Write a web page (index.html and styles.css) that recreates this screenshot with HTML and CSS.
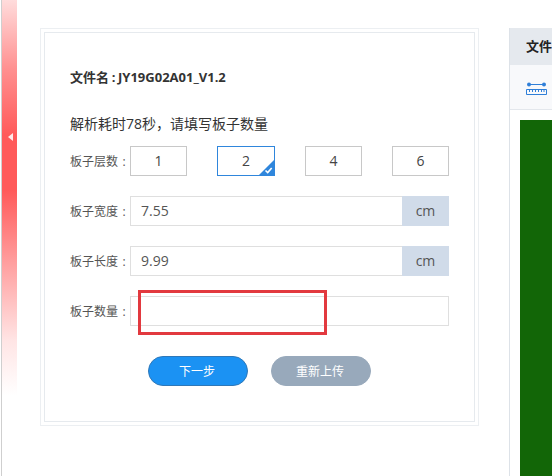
FILE: index.html
```html
<!DOCTYPE html>
<html lang="zh">
<head>
<meta charset="utf-8">
<title>板子数量</title>
<link rel="stylesheet" href="styles.css">
</head>
<body>
<div class="page">
  <aside class="rail"><span class="rail-arrow"></span></aside>
  <main class="card-outer">
    <div class="card">
      <div class="file-name">文件名<span class="sep">:</span>JY19G02A01_V1.2</div>
      <div class="hint">解析耗时78秒<span class="punct">，</span>请填写板子数量</div>
      <div class="row">
        <span class="label">板子层数<span class="colon">:</span></span>
        <div class="layers">
          <span class="layer">1</span>
          <span class="layer active">2<svg class="tick" viewBox="0 0 15 15"><path d="M15 0V15H0Z" fill="#2f86dc"/><path d="M6.5 10.5l2.2 2 4-4.6" fill="none" stroke="#fff" stroke-width="1.6"/></svg></span>
          <span class="layer">4</span>
          <span class="layer">6</span>
        </div>
      </div>
      <div class="row">
        <span class="label">板子宽度<span class="colon">:</span></span>
        <div class="field"><span class="value">7.55</span><span class="unit">cm</span></div>
      </div>
      <div class="row">
        <span class="label">板子长度<span class="colon">:</span></span>
        <div class="field"><span class="value">9.99</span><span class="unit">cm</span></div>
      </div>
      <div class="row">
        <span class="label">板子数量<span class="colon">:</span></span>
        <div class="field"><span class="value"></span></div>
        <span class="callout"></span>
      </div>
      <div class="actions">
        <span class="btn btn-next">下一步</span>
        <span class="btn btn-reset">重新上传</span>
      </div>
    </div>
  </main>
  <section class="preview">
    <header class="preview-head">文件名<span class="sep">:</span>JY19G02A01_V1.2</header>
    <div class="preview-tools">
      <svg class="ruler" viewBox="0 0 21 15" width="21" height="15">
        <path d="M3 4.5H18" stroke="#2f7fd8" stroke-width="1" fill="none"/>
        <circle cx="3" cy="4.5" r="2" fill="#2f7fd8"/>
        <circle cx="18" cy="4.5" r="2" fill="#2f7fd8"/>
        <path d="M.5 9.5H20.5V14.5H.5ZM3.5 9.5V12M6.5 9.5V12M9.5 9.5V12M12.5 9.5V12M15.5 9.5V12M18 9.5V12" stroke="#2f7fd8" stroke-width="1" fill="none"/>
      </svg>
    </div>
    <div class="preview-body"><div class="board"></div></div>
  </section>
</div>
</body>
</html>
```
FILE: styles.css
```css
html, body {
  margin: 0;
  height: 100%;
  overflow: hidden;
  background: #fff;
}
body {
  font-family: "Open Sans", "Noto Sans CJK SC", sans-serif;
  color: #333;
}
.page {
  display: flex;
  align-items: flex-start;
  width: 552px;
  height: 476px;
  overflow: hidden;
}
.rail {
  flex: none;
  position: relative;
  width: 15px;
  height: 476px;
  margin-left: 2px;
  background: linear-gradient(to bottom, #ffdcdc 0, #ff8f8f 70px, #ff5a5a 135px, #ff5a5a 190px, #ff9c9c 260px, #ffe4e4 340px, #fff 395px);
  box-shadow: -1px 0 0 #cfcfcf;
}
.rail-arrow {
  position: absolute;
  left: 6px;
  top: 133px;
  border-style: solid;
  border-width: 4px 5px 4px 0;
  border-color: transparent #ffe9e9 transparent transparent;
}
.punct {
  font-family: "Noto Sans CJK TC", sans-serif;
}
.sep {
  display: inline-block;
  width: 9px;
  text-align: center;
}
.colon {
  display: inline-block;
  width: 12px;
  text-align: center;
}
.card-outer {
  flex: none;
  box-sizing: border-box;
  width: 439px;
  height: 398px;
  margin: 28px 0 0 23px;
  padding: 3px;
  border: 1px solid #eceff2;
}
.card {
  box-sizing: border-box;
  height: 100%;
  padding: 35px 25px 0;
  border: 1px solid #e6eaee;
}
.file-name {
  font-size: 13px;
  font-weight: 700;
  line-height: 18px;
  color: #333;
}
.hint {
  margin-top: 27px;
  font-size: 14px;
  line-height: 20px;
  color: #333;
}
.row {
  position: relative;
  display: flex;
  align-items: center;
  height: 30px;
  margin-top: 20px;
}
.hint + .row {
  margin-top: 12px;
}
.label {
  flex: none;
  width: 60px;
  font-size: 12px;
  color: #555;
  white-space: nowrap;
}
.layers {
  flex: 1;
  display: flex;
  justify-content: space-between;
}
.layer {
  position: relative;
  box-sizing: border-box;
  width: 57px;
  height: 30px;
  border: 1px solid #c8c8c8;
  text-align: center;
  font-size: 14px;
  line-height: 28px;
  color: #444;
}
.layer.active {
  width: 58px;
  border-color: #2f86dc;
}
.tick {
  position: absolute;
  right: 0;
  bottom: 0;
  width: 15px;
  height: 15px;
}
.field {
  flex: 1;
  display: flex;
  box-sizing: border-box;
  height: 30px;
  border: 1px solid #dfdfdf;
}
.value {
  flex: 1;
  padding-left: 10px;
  font-size: 14px;
  line-height: 27px;
  color: #555;
}
.unit {
  flex: none;
  width: 47px;
  margin: -1px -1px -1px 0;
  background: #d0dbe9;
  text-align: center;
  font-size: 14px;
  line-height: 29px;
  color: #555;
}
.callout {
  position: absolute;
  left: 68px;
  top: -6px;
  box-sizing: border-box;
  width: 189px;
  height: 45px;
  border: 3px solid #e2393f;
}
.actions {
  display: flex;
  gap: 23px;
  margin: 30px 0 0 78px;
}
.btn {
  box-sizing: border-box;
  width: 100px;
  height: 30px;
  padding-right: 2px;
  border-radius: 15px;
  text-align: center;
  font-size: 12px;
  line-height: 29px;
  color: #fff;
}
.btn-next {
  background: #1b92f3;
  border: 1px solid #2f78b8;
}
.btn-reset {
  background: #98a9bb;
  border: 1px solid #98a9bb;
}
.preview {
  flex: none;
  width: 400px;
  height: 448px;
  margin: 28px 0 0 30px;
  background: #f8f9fb;
  border-left: 1px solid #dde2e8;
}
.preview-head {
  box-sizing: border-box;
  height: 37px;
  padding-left: 16px;
  background: #e5e9ee;
  font-size: 13px;
  font-weight: 700;
  line-height: 36px;
  color: #222;
  white-space: nowrap;
}
.preview-tools {
  box-sizing: border-box;
  height: 45px;
  padding: 15px 0 0 16px;
  border-bottom: 1px solid #e3e7ec;
}
.ruler {
  display: block;
}
.preview-body {
  padding: 10px 0 0 10px;
  background: #fff;
  height: 366px;
}
.board {
  height: 366px;
  background: #126607;
}
```
